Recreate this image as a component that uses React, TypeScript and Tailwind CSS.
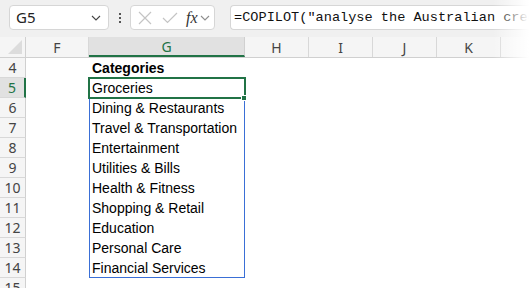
import React from "react";

const items = [
  "Groceries",
  "Dining & Restaurants",
  "Travel & Transportation",
  "Entertainment",
  "Utilities & Bills",
  "Health & Fitness",
  "Shopping & Retail",
  "Education",
  "Personal Care",
  "Financial Services",
];

const cols = [
  { l: "F", w: "w-[63px]" },
  { l: "G", w: "w-[156px]" },
  { l: "H", w: "w-[64px]" },
  { l: "I", w: "w-[64px]" },
  { l: "J", w: "w-[64px]" },
  { l: "K", w: "w-[64px]" },
];

const ui = { fontFamily: '"Noto Sans", "Open Sans", sans-serif' };
const cell = { fontFamily: '"Liberation Sans", Arial, sans-serif' };

function Chevron({ className = "" }: { className?: string }) {
  return (
    <svg width="10" height="6" viewBox="0 0 10 6" className={className}>
      <path d="M1 1 L5 5 L9 1" fill="none" stroke="#444" strokeWidth="1.1" />
    </svg>
  );
}

export default function App() {
  const rows = [4, 5, 6, 7, 8, 9, 10, 11, 12, 13, 14, 15];
  return (
    <div className="relative w-[529px] h-[288px] overflow-hidden bg-white" style={ui}>
      {/* Formula bar */}
      <div className="h-[37px] bg-[#f0f0f0] flex items-start pt-[5px] pl-[9px]">
        <div className="w-[100px] h-[25px] bg-white border border-[#d6d6d6] rounded-[4px] flex items-center pl-[6px] pr-[7px] justify-between">
          <span className="text-[15px] text-[#222] leading-none">G5</span>
          <Chevron />
        </div>
        <div className="w-[21px] h-[25px] flex flex-col items-center justify-center gap-[2px]">
          <div className="w-[2px] h-[2px] bg-[#555]" />
          <div className="w-[2px] h-[2px] bg-[#555]" />
          <div className="w-[2px] h-[2px] bg-[#555]" />
        </div>
        <div className="w-[85px] h-[25px] bg-white border border-[#d6d6d6] rounded-[4px] flex items-center pl-[7px]">
          <svg width="14" height="14" viewBox="0 0 14 14">
            <path d="M1 1 L13 13 M13 1 L1 13" stroke="#c4c4c4" strokeWidth="1.2" fill="none" />
          </svg>
          <svg width="16" height="12" viewBox="0 0 16 12" className="ml-[10px]">
            <path d="M1 6 L5.5 10.5 L15 1" stroke="#c4c4c4" strokeWidth="1.2" fill="none" />
          </svg>
          <span
            className="ml-[8px] text-[16px] italic text-[#333] leading-none"
            style={{ fontFamily: '"Liberation Serif", "Times New Roman", serif' }}
          >
            fx
          </span>
          <Chevron className="ml-[2px] opacity-60" />
        </div>
        <div className="ml-[15px] flex-1 h-[25px] bg-white border border-[#d6d6d6] border-r-0 rounded-l-[4px] flex items-center pl-[3px] overflow-hidden whitespace-nowrap">
          <span
            className="text-[13.6px] text-[#111] leading-none"
            style={{ fontFamily: '"Liberation Mono", "DejaVu Sans Mono", monospace' }}
          >
            =COPILOT("analyse the Australian credit card transactions")
          </span>
        </div>
      </div>

      {/* Column headers */}
      <div className="flex h-[21px] bg-[#f5f5f5] border-b border-[#d0d0d0]">
        <div className="w-[26px] shrink-0 border-r border-[#d0d0d0] relative">
          <svg width="14" height="14" viewBox="0 0 14 14" className="absolute right-[3px] bottom-[3px]">
            <path d="M14 0 L14 14 L0 14 Z" fill="#dcdcdc" />
          </svg>
        </div>
        {cols.map((c) =>
          c.l === "G" ? (
            <div
              key={c.l}
              className={`${c.w} shrink-0 bg-[#e1e1e1] border-r border-[#d0d0d0] border-b-2 border-b-[#217346] flex items-center justify-center text-[14px] text-[#217346]`}
            >
              {c.l}
            </div>
          ) : (
            <div
              key={c.l}
              className={`${c.w} shrink-0 border-r border-[#d8d8d8] flex items-center justify-center text-[14px] text-[#444]`}
            >
              {c.l}
            </div>
          )
        )}
        <div className="flex-1" />
      </div>

      {/* Rows */}
      {rows.map((r) => {
        const sel = r === 5;
        const text = r === 4 ? "Categories" : r >= 5 && r <= 14 ? items[r - 5] : "";
        return (
          <div key={r} className="flex h-[20px]">
            <div
              className={
                sel
                  ? "w-[26px] shrink-0 bg-[#e1e1e1] border-b border-[#d8d8d8] border-r-2 border-r-[#217346] flex items-center justify-center text-[14px] text-[#217346]"
                  : "w-[26px] shrink-0 bg-[#f5f5f5] border-b border-[#d8d8d8] border-r border-r-[#d0d0d0] flex items-center justify-center text-[14px] text-[#444]"
              }
            >
              {r}
            </div>
            <div className="w-[63px] shrink-0" />
            <div
              className={`w-[156px] shrink-0 flex items-center pl-[3px] text-[14px] text-black whitespace-nowrap ${
                r === 4 ? "font-bold" : ""
              }`}
              style={cell}
            >
              {text}
            </div>
            <div className="flex-1" />
          </div>
        );
      })}

      {/* Spill range (blue) */}
      <div className="absolute left-[89px] top-[78px] w-[156px] h-[200px] border border-[#3a6fd6] pointer-events-none" />
      {/* Active cell (green) */}
      <div className="absolute left-[88px] top-[77px] w-[158px] h-[22px] border-2 border-[#217346] pointer-events-none" />
      <div className="absolute left-[241px] top-[95px] w-[6px] h-[6px] bg-[#217346] border border-white pointer-events-none" />

      {/* Right edge fade */}
      <div className="absolute right-0 top-0 h-full w-[36px] bg-gradient-to-r from-transparent to-white pointer-events-none" />
    </div>
  );
}
